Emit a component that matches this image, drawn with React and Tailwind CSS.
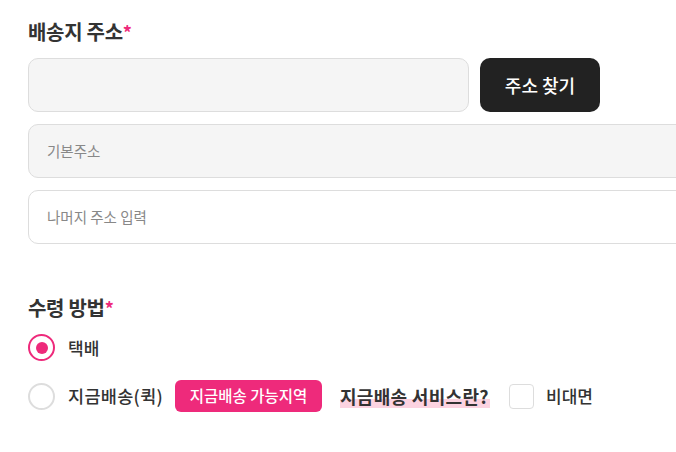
export default function App() {
  return (
    <div className="w-[676px] h-[452px] bg-white overflow-hidden pt-[17px] pl-[28px] text-[#333]" style={{ fontFamily: '"Noto Sans CJK KR", "Noto Sans", sans-serif' }}>
      <h2 className="text-[20px] font-semibold leading-[30px] tracking-[-0.3px]">
        배송지 주소<span className="text-[#ee2a7b] text-[18px] align-top">*</span>
      </h2>
      <div className="mt-[11px] flex gap-[11px]">
        <div className="w-[441px] h-[54px] rounded-[10px] border border-[#dddddd] bg-[#f5f5f5]" />
        <button className="w-[120px] h-[54px] rounded-[10px] bg-[#222222] text-white text-[18px] font-medium">
          주소 찾기
        </button>
      </div>
      <div className="mt-[12px] w-[680px] h-[54px] rounded-[10px] border border-[#dddddd] bg-[#f5f5f5] flex items-center pl-[18px] text-[14.5px] text-[#888]">
        기본주소
      </div>
      <div className="mt-[12px] w-[680px] h-[54px] rounded-[10px] border border-[#dddddd] bg-white flex items-center pl-[18px] text-[14.5px] text-[#888]">
        나머지 주소 입력
      </div>
      <h2 className="mt-[49px] text-[20px] font-semibold leading-[30px] tracking-[-0.3px]">
        수령 방법<span className="text-[#ee2a7b] text-[18px] align-top">*</span>
      </h2>
      <div className="mt-[11px] flex items-center h-[27px]">
        <div className="w-[27px] h-[27px] rounded-full border-2 border-[#ee2a7b] flex items-center justify-center">
          <div className="w-[12px] h-[12px] rounded-full bg-[#ee2a7b]" />
        </div>
        <span className="ml-[13px] text-[17px] font-medium">택배</span>
      </div>
      <div className="mt-[19px] flex items-center h-[32px]">
        <div className="w-[27px] h-[27px] rounded-full border-2 border-[#dddddd] bg-white" />
        <span className="ml-[13px] w-[95px] text-[17.5px] font-medium tracking-[0.3px] whitespace-nowrap">지금배송(퀵)</span>
        <span className="ml-[12px] h-[32px] w-[147px] rounded-[6px] bg-[#ee2a7b] text-white text-[15.5px] font-medium flex items-center justify-center">
          지금배송 가능지역
        </span>
        <span className="ml-[18px] w-[150px] whitespace-nowrap text-[18px] font-semibold leading-[24px] tracking-[0.3px] bg-[linear-gradient(transparent_62%,#fcd3e1_62%)]">
          지금배송 서비스란?
        </span>
        <div className="ml-[19px] w-[25px] h-[25px] rounded-[4px] border border-[#dddddd] bg-white" />
        <span className="ml-[12px] text-[17px] font-medium">비대면</span>
      </div>
    </div>
  );
}
